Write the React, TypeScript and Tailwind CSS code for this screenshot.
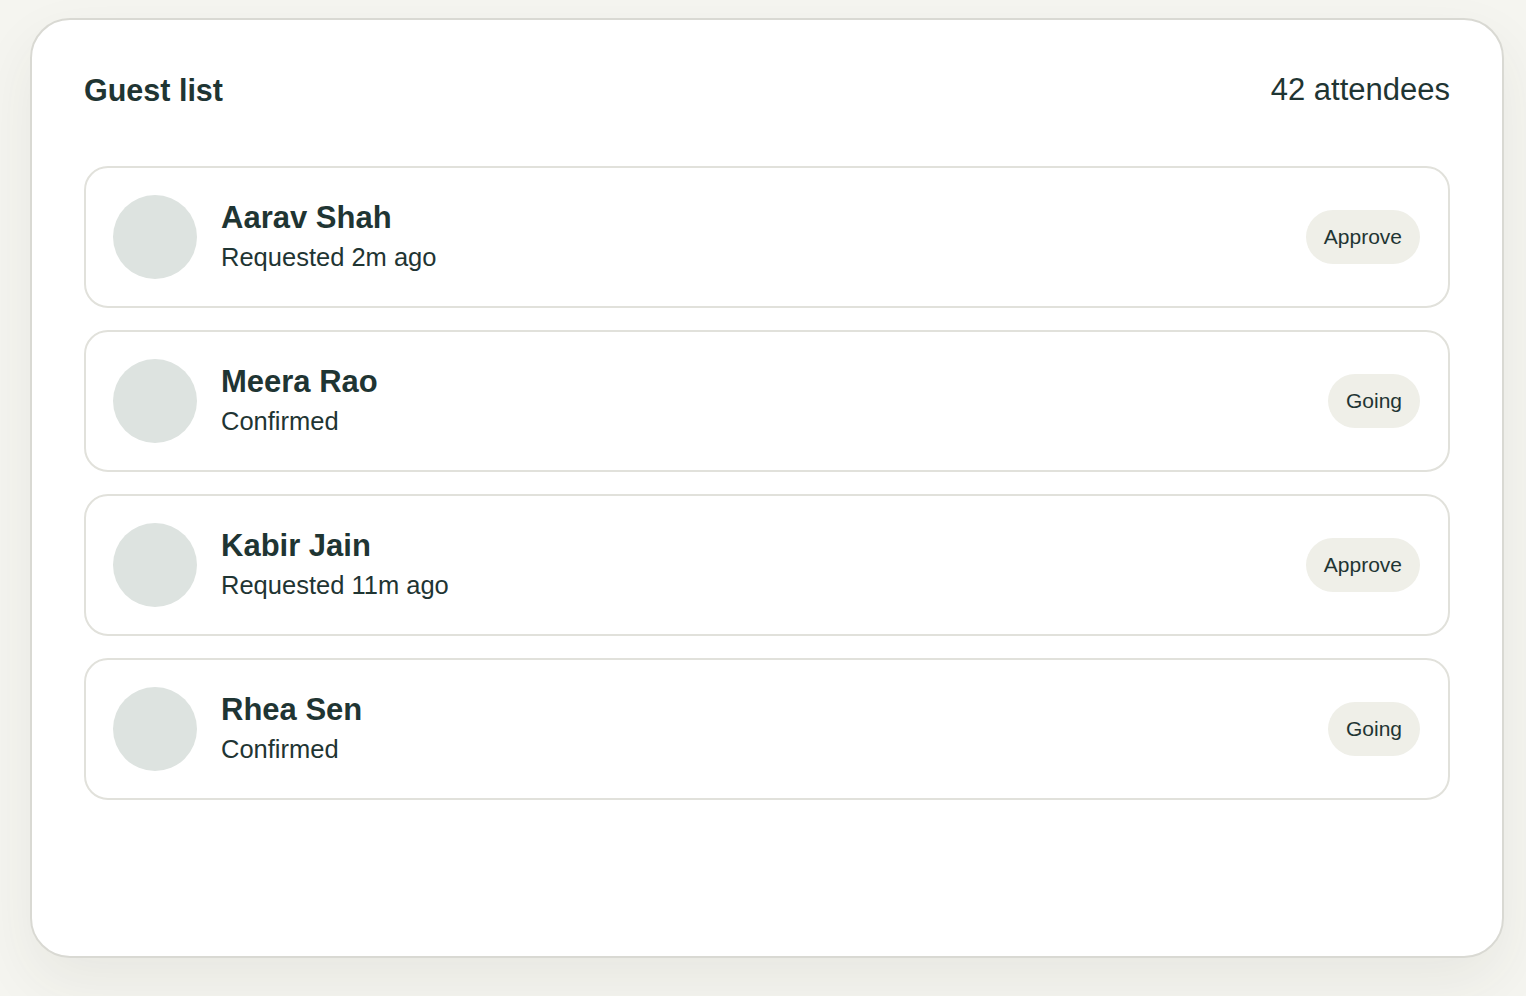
import React from 'react';

type Guest = {
  name: string;
  status: string;
  action: 'Approve' | 'Going';
};

const guests: Guest[] = [
  { name: 'Aarav Shah', status: 'Requested 2m ago', action: 'Approve' },
  { name: 'Meera Rao', status: 'Confirmed', action: 'Going' },
  { name: 'Kabir Jain', status: 'Requested 11m ago', action: 'Approve' },
  { name: 'Rhea Sen', status: 'Confirmed', action: 'Going' },
];

const GuestRow = ({ guest }: { guest: Guest }) => (
  <div className="flex h-[142px] items-center gap-[24px] rounded-[24px] border-2 border-[#e1e1db] bg-white pl-[27px] pr-[28px]">
    <div className="h-[84px] w-[84px] shrink-0 rounded-full bg-[#dde3e0]" />
    <div className="flex flex-1 flex-col">
      <div className="text-[31px] font-bold leading-[40px]">{guest.name}</div>
      <div className="text-[25.5px] leading-[38px]">{guest.status}</div>
    </div>
    <button className="h-[54px] rounded-full bg-[#efefe8] px-[18px] text-[21px] text-[#1f3533]">
      {guest.action}
    </button>
  </div>
);

export default function App() {
  return (
    <div className="min-h-[996px] w-full overflow-hidden bg-[#f5f5f0] pt-[18px] pl-[30px] font-['Liberation_Sans',Arial,sans-serif] text-[#1f3533]">
      <div className="h-[940px] w-[1474px] rounded-[40px] border-2 border-[#d9d9d3] bg-white px-[52px] pt-[52px] shadow-[0_24px_60px_rgba(60,60,40,0.07)]">
        <div className="flex items-center justify-between">
          <h1 className="text-[30.5px] font-bold leading-[36px]">Guest list</h1>
          <span className="text-[31px] leading-[36px]">42 attendees</span>
        </div>
        <div className="mt-[58px] flex flex-col gap-[22px]">
          {guests.map((guest) => (
            <GuestRow key={guest.name} guest={guest} />
          ))}
        </div>
      </div>
    </div>
  );
}
